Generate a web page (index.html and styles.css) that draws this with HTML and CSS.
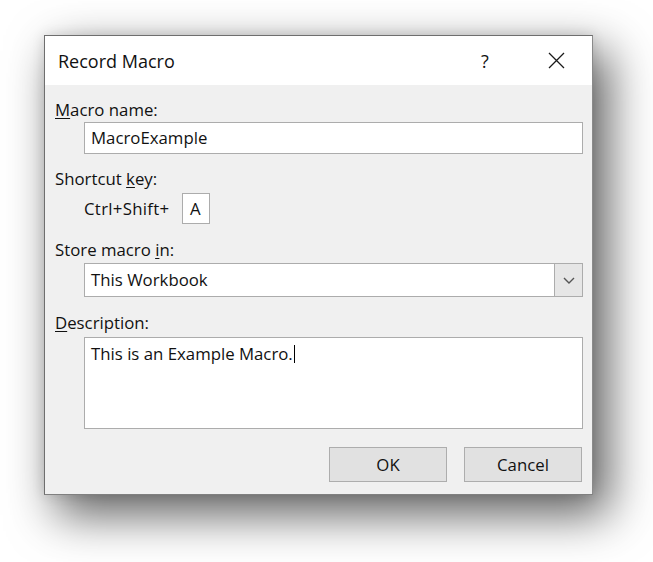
FILE: index.html
```html
<!DOCTYPE html>
<html lang="en">
<head>
<meta charset="utf-8">
<title>Record Macro</title>
<link rel="stylesheet" href="styles.css">
</head>
<body>
<div class="stage">
  <div class="dialog">
    <div class="titlebar">
      <span class="title">Record Macro</span>
      <span class="help">?</span>
      <svg class="close" width="17" height="17" viewBox="0 0 17 17"><path d="M1 1 L16 16 M16 1 L1 16" stroke="#1a1a1a" stroke-width="1.3" fill="none"/></svg>
    </div>
    <div class="body">
      <div class="label l1"><u>M</u>acro name:</div>
      <div class="field input">MacroExample</div>
      <div class="label l2">Shortcut <u>k</u>ey:</div>
      <div class="shortcut">
        <span class="keys">Ctrl+Shift+</span>
        <span class="keybox">A</span>
      </div>
      <div class="label l3">Store macro <u>i</u>n:</div>
      <div class="field select">
        <span class="select-text">This Workbook</span>
        <span class="drop"><svg width="12" height="7" viewBox="0 0 12 7"><path d="M1 1 L6 6 L11 1" stroke="#555" stroke-width="1.4" fill="none"/></svg></span>
      </div>
      <div class="label l4"><u>D</u>escription:</div>
      <div class="field textarea"><span>This is an Example Macro.</span><span class="caret"></span></div>
      <div class="buttons">
        <div class="btn">OK</div>
        <div class="btn">Cancel</div>
      </div>
    </div>
  </div>
</div>
</body>
</html>
```
FILE: styles.css
```css
html, body {
  margin: 0;
  padding: 0;
  background: #ffffff;
}
body {
  width: 653px;
  height: 562px;
  overflow: hidden;
  font-family: "Open Sans", "Noto Sans", sans-serif;
  font-size: 16.8px;
  color: #111111;
}
.stage {
  padding: 35px 0 0 44px;
}
.dialog {
  width: 547px;
  height: 458px;
  border: 1px solid #6e6e6e;
  border-right-color: #8a8a8a;
  border-bottom-color: #808080;
  background: #f0f0f0;
  box-shadow: 14px 18px 44px 2px rgba(0, 0, 0, 0.62), 0 0 12px rgba(0, 0, 0, 0.12);
  display: flex;
  flex-direction: column;
}
.titlebar {
  height: 49px;
  background: #ffffff;
  display: flex;
  align-items: center;
  padding-left: 13px;
}
.title {
  font-size: 18px;
  flex: 1;
}
.help {
  font-size: 18px;
  width: 20px;
  margin-right: 47px;
}
.close {
  margin-right: 27px;
}
.body {
  display: flex;
  flex-direction: column;
  padding: 14px 9px 0 10px;
}
.label {
  height: 22px;
  line-height: 22px;
}
.label u {
  text-decoration-thickness: 1px;
  text-underline-offset: 2px;
}
.field {
  margin-left: 29px;
  background: #ffffff;
  border: 1px solid #acacac;
  box-sizing: border-box;
}
.input {
  margin-top: 1px;
  height: 32px;
  line-height: 30px;
  padding-left: 6px;
}
.l2 {
  margin-top: 14px;
}
.shortcut {
  margin-top: 3px;
  margin-left: 29px;
  display: flex;
  align-items: center;
  height: 31px;
}
.keys {
  width: 98px;
  letter-spacing: 0.3px;
}
.keybox {
  width: 28px;
  height: 31px;
  box-sizing: border-box;
  border: 1px solid #acacac;
  background: #ffffff;
  line-height: 29px;
  padding-left: 7px;
}
.l3 {
  margin-top: 15px;
}
.select {
  margin-top: 2px;
  height: 34px;
  display: flex;
  align-items: stretch;
}
.select-text {
  flex: 1;
  line-height: 32px;
  padding-left: 6px;
}
.drop {
  width: 27px;
  background: #e6e6e6;
  border-left: 1px solid #acacac;
  display: flex;
  align-items: center;
  justify-content: center;
}
.l4 {
  margin-top: 15px;
}
.textarea {
  margin-top: 3px;
  height: 92px;
  padding: 5px 6px;
  line-height: 22px;
}
.caret {
  display: inline-block;
  width: 1px;
  height: 18px;
  background: #000;
  vertical-align: -3px;
  margin-left: 1px;
}
.buttons {
  margin-top: 18px;
  display: flex;
  justify-content: flex-end;
  gap: 17px;
  padding-right: 1px;
}
.btn {
  width: 118px;
  height: 35px;
  box-sizing: border-box;
  background: #e1e1e1;
  border: 1px solid #adadad;
  text-align: center;
  line-height: 33px;
}
```
